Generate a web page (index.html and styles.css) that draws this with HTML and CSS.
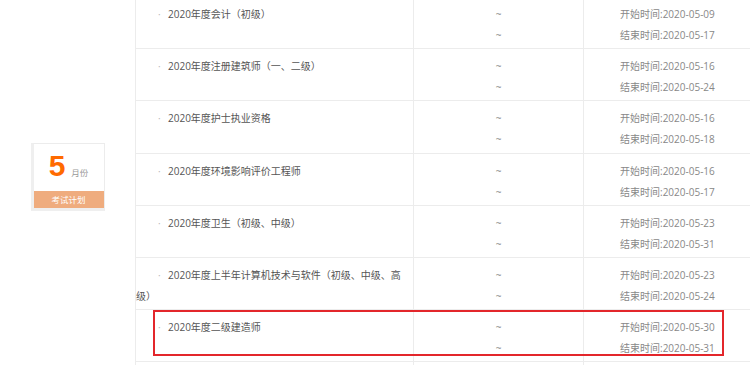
FILE: index.html
```html
<!DOCTYPE html>
<html lang="zh-CN">
<head>
<meta charset="utf-8">
<title>考试计划</title>
<link rel="stylesheet" href="styles.css">
</head>
<body>
<div class="page">
  <div class="month-col">
    <div class="badge">
      <div class="badge-top"><span class="num">5</span><span class="unit">月份</span></div>
      <div class="badge-bar">考试计划</div>
    </div>
  </div>
  <div class="rows">
    <div class="row">
      <div class="cell title"><span class="dot">·</span>2020年度会计（初级）</div>
      <div class="cell tilde">~<br>~</div>
      <div class="cell date">开始时间:2020-05-09<br>结束时间:2020-05-17</div>
    </div>
    <div class="row">
      <div class="cell title"><span class="dot">·</span>2020年度注册建筑师（一、二级）</div>
      <div class="cell tilde">~<br>~</div>
      <div class="cell date">开始时间:2020-05-16<br>结束时间:2020-05-24</div>
    </div>
    <div class="row">
      <div class="cell title"><span class="dot">·</span>2020年度护士执业资格</div>
      <div class="cell tilde">~<br>~</div>
      <div class="cell date">开始时间:2020-05-16<br>结束时间:2020-05-18</div>
    </div>
    <div class="row">
      <div class="cell title"><span class="dot">·</span>2020年度环境影响评价工程师</div>
      <div class="cell tilde">~<br>~</div>
      <div class="cell date">开始时间:2020-05-16<br>结束时间:2020-05-17</div>
    </div>
    <div class="row">
      <div class="cell title"><span class="dot">·</span>2020年度卫生（初级、中级）</div>
      <div class="cell tilde">~<br>~</div>
      <div class="cell date">开始时间:2020-05-23<br>结束时间:2020-05-31</div>
    </div>
    <div class="row">
      <div class="cell title"><span class="dot">·</span>2020年度上半年计算机技术与软件（初级、中级、高级）</div>
      <div class="cell tilde">~<br>~</div>
      <div class="cell date">开始时间:2020-05-23<br>结束时间:2020-05-24</div>
    </div>
    <div class="row">
      <div class="cell title"><span class="dot">·</span>2020年度二级建造师</div>
      <div class="cell tilde">~<br>~</div>
      <div class="cell date">开始时间:2020-05-30<br>结束时间:2020-05-31</div>
    </div>
    <div class="row">
      <div class="cell title"></div>
      <div class="cell tilde"></div>
      <div class="cell date"></div>
    </div>
  </div>
  <div class="highlight"></div>
</div>
</body>
</html>
```

FILE: styles.css
```css
html, body {
  margin: 0;
  padding: 0;
  background: #fff;
  overflow: hidden;
}

.page {
  position: relative;
  display: flex;
  width: 760px;
  height: 365px;
  overflow: hidden;
  font-family: "Open Sans", "Noto Sans CJK SC", sans-serif;
  font-size: 10px;
  color: #555;
}

.month-col {
  width: 136px;
  flex: none;
  border-right: 1px solid #ececec;
  display: flex;
  justify-content: center;
  align-items: flex-start;
  padding-top: 143px;
  box-sizing: border-box;
  height: 365px;
}

.badge {
  width: 70px;
  background: #fff;
  border: 1px solid #ececec;
  border-left: 3px solid #efefef;
  border-bottom: 3px solid #efefef;
}

.badge-top {
  height: 47px;
  display: flex;
  justify-content: center;
  align-items: baseline;
  padding-top: 2px;
  box-sizing: border-box;
}

.num {
  font-family: "Liberation Sans", Arial, sans-serif;
  font-weight: bold;
  font-size: 30px;
  line-height: 40px;
  color: #ff6a00;
  margin-right: 6px;
}

.unit {
  font-family: "Noto Sans CJK SC", sans-serif;
  font-size: 8.5px;
  color: #999;
}

.badge-bar {
  height: 17px;
  line-height: 17px;
  background: #efac7e;
  color: #fff;
  text-align: center;
  font-family: "Noto Sans CJK SC", sans-serif;
  font-size: 8.5px;
}

.rows {
  flex: 1;
  margin-top: -3px;
}

.row {
  display: grid;
  grid-template-columns: 278px 170px 1fr;
  border-bottom: 1px solid #ececec;
}

.cell {
  padding: 7px 0 2.2px;
  line-height: 21px;
  height: 42px;
}

.title {
  border-right: 1px solid #ececec;
  text-indent: 22px;
  padding-right: 10px;
  color: #555;
}

.dot {
  display: inline-block;
  width: 10px;
  text-indent: 0;
  text-align: left;
  color: #bbb;
}

.tilde {
  border-right: 1px solid #ececec;
  text-align: center;
  color: #888;
}

.date {
  padding-left: 36px;
  color: #888;
}

.highlight {
  position: absolute;
  left: 153px;
  top: 310px;
  width: 567px;
  height: 42px;
  border: 2px solid #e3262b;
}
```
